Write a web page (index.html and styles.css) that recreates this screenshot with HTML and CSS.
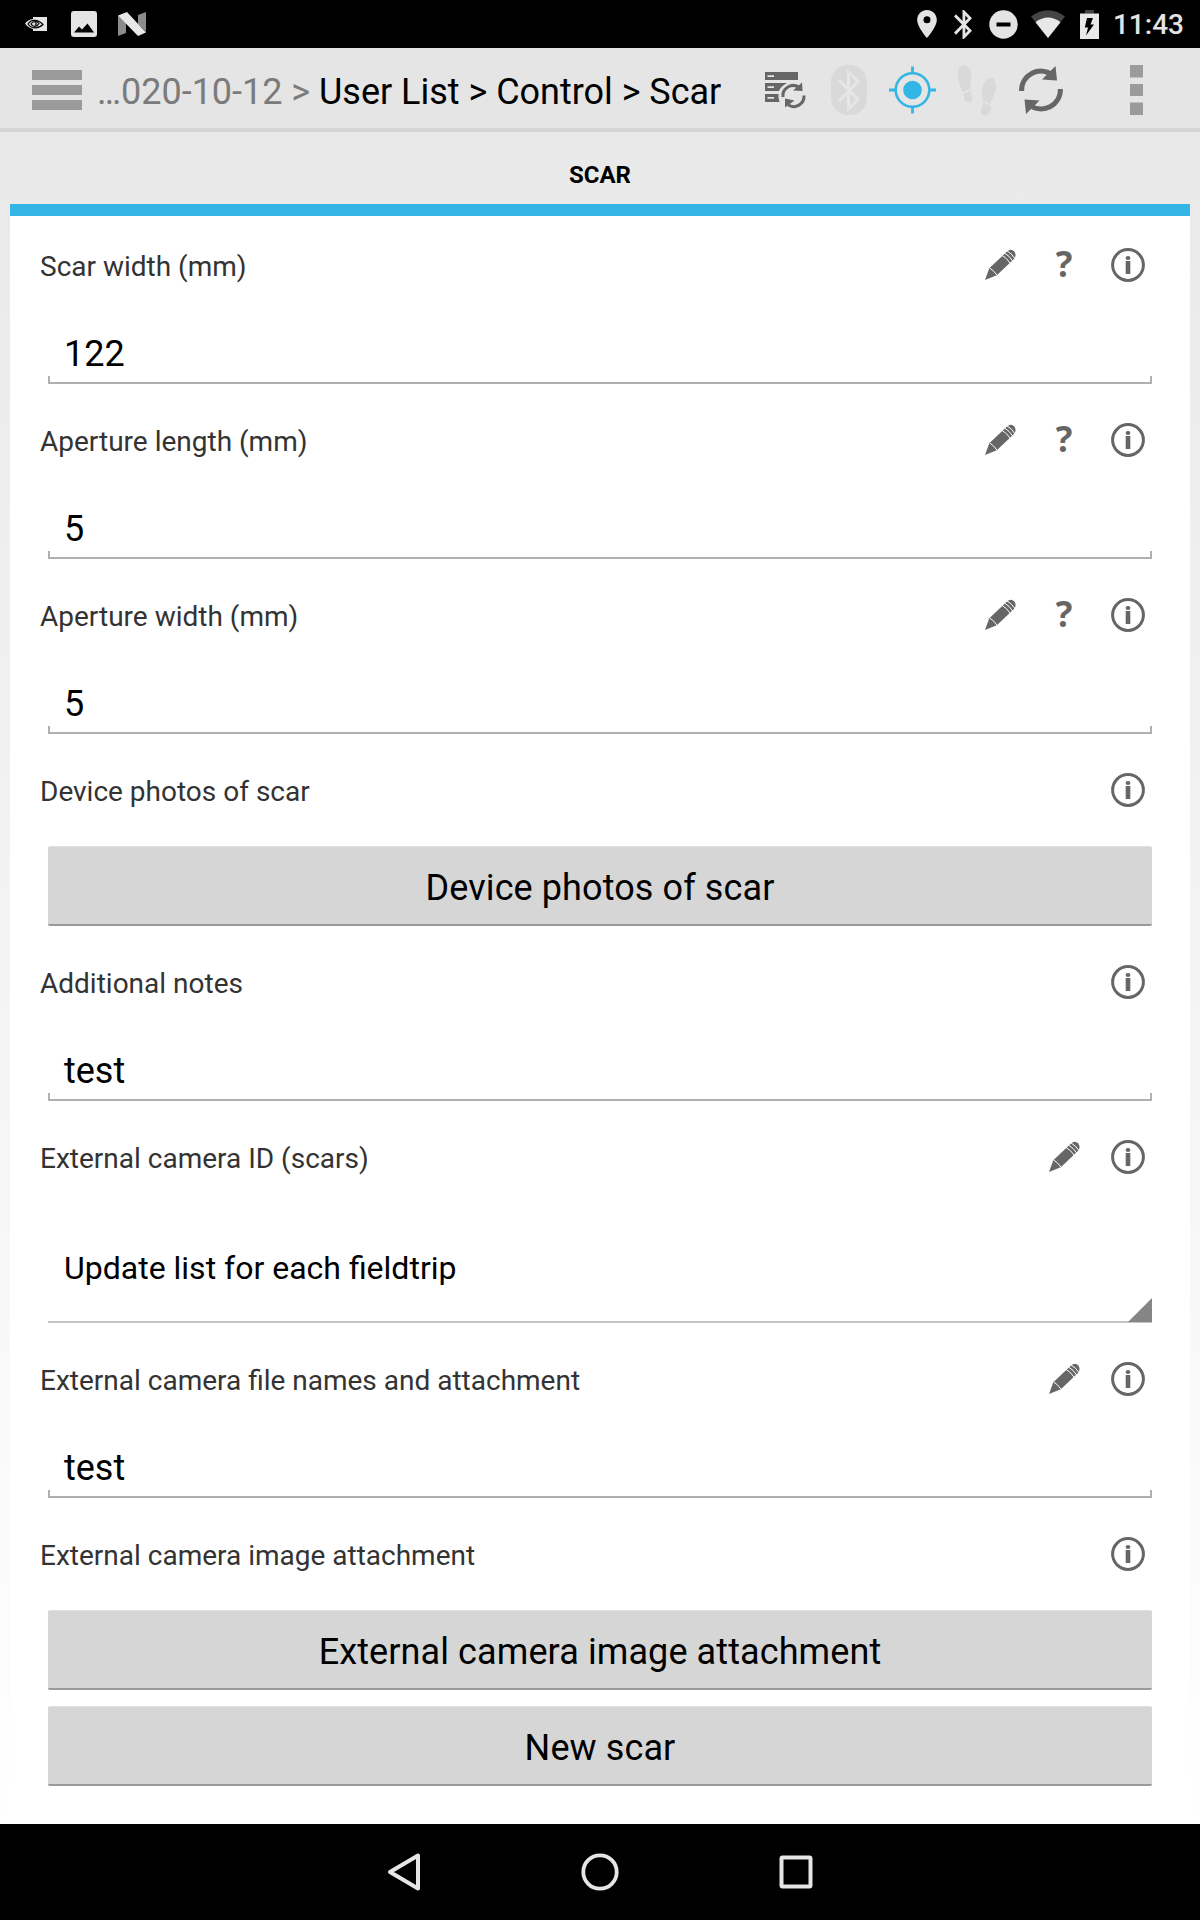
FILE: index.html
```html
<!DOCTYPE html>
<html lang="en">
<head>
<meta charset="utf-8">
<title>Scar</title>
<link rel="stylesheet" href="styles.css">
</head>
<body>
<svg class="defs" width="0" height="0" aria-hidden="true">
  <symbol id="pencil" viewBox="0 0 32 32">
    <path fill="#666" d="M1 31 5.300 19.300 23 2.600Q27-.8 30.300 2.400 33 6 30 10L12.800 26.300Z"/>
    <path d="M5.300 18.700Q10 21.500 13.500 26.800M17.800 6.200Q23.200 9.300 26.300 14.500M20.400 4Q25.500 6.800 28.700 12M22.800 1.800Q28 4.500 31 9.800" fill="none" stroke="#fff" stroke-width="1"/>
  </symbol>
  <symbol id="info" viewBox="0 0 34 34">
    <circle cx="17" cy="17" r="15.400" fill="none" stroke="#666" stroke-width="3"/>
    <ellipse cx="17" cy="10" rx="2.400" ry="2.100" fill="#666"/>
    <path d="M14.700 13h4.600v13h-4.600z" fill="#666"/>
  </symbol>
</svg>

<header class="status">
  <div class="status-left">
    <svg width="22" height="14" viewBox="0 0 22 14">
      <path d="M8 0h14v14H8v-2C4 11 1.500 9 0 6.500 2 4 4.500 2.400 8 2z" fill="#e4e4e4"/>
      <path d="M3 7C6 2 13 2 18 7.500 13.500 12 6 12 3 7ZM6 7c2-3.500 6-3 8-.5-2 3.500-6 4-8 .5Zm3.500-1.500c2 0 2.500 2 .5 2.500" fill="none" stroke="#000" stroke-width="1.200"/>
    </svg>
    <svg width="26" height="26" viewBox="0 0 26 26">
      <rect width="26" height="26" rx="3" fill="#e4e4e4"/>
      <path d="M3 21.500 8 15.500 11 18.500 16.500 12.500 23 21.500Z" fill="#000"/>
    </svg>
    <svg width="28" height="24" viewBox="0 0 28 24">
      <path d="M0 3.500 8 11V21L0 24ZM20 3 28 0V20L20 12Z" fill="#8c8c8c"/>
      <path d="M0 3.500 9 0 28 20.500 20 24Z" fill="#e8e8e8"/>
    </svg>
  </div>
  <div class="status-right">
    <svg class="s-pin" width="20" height="28" viewBox="5 2 14 20" fill="#e4e4e4"><path d="M12 2C8.130 2 5 5.130 5 9c0 5.250 7 13 7 13s7-7.750 7-13c0-3.870-3.130-7-7-7zm0 9.500a2.500 2.500 0 1 1 0-5 2.500 2.500 0 0 1 0 5z"/></svg>
    <svg class="s-bt" width="18" height="29" viewBox="5 2 12.710 20" preserveAspectRatio="none" fill="#e4e4e4"><path d="M17.710 7.710 12 2h-1v7.590L6.410 5 5 6.410 10.590 12 5 17.590 6.410 19 11 14.410V22h1l5.710-5.710L13.410 12l4.300-4.290zM13 5.830l1.880 1.880L13 9.590V5.830zm1.880 10.460L13 18.170v-3.760l1.880 1.880z"/></svg>
    <svg class="s-dnd" width="29" height="29" viewBox="0 0 29 29"><circle cx="14.500" cy="14.500" r="14.200" fill="#e4e4e4"/><path d="M7.500 12.500h14v4h-14z" fill="#000"/></svg>
    <svg class="s-wifi" width="34" height="28" viewBox="0 0 34 28"><path d="M17 28 0 6.500Q17-6 34 6.500Z" fill="#444"/><path d="M17 28 4.500 12.200Q17 3 29.500 12.200Z" fill="#e8e8e8"/></svg>
    <svg class="s-bat" width="19" height="29" viewBox="0 0 19 29"><path d="M5 0h9v3.500H5z" fill="#444"/><path d="M0 3.500h19V29H0z" fill="#e8e8e8"/><path d="M7 8h6L10.500 14.500H14L6 25.500 8 17.500H4.800Z" fill="#000"/></svg>
    <span class="clock">11:43</span>
  </div>
</header>

<div class="appbar">
  <svg class="menu" width="50" height="40" viewBox="0 0 50 40"><path d="M0 0h50v10H0zM0 15h50v10H0zM0 30h50v10H0z" fill="#9b9b9b"/></svg>
  <h1 class="crumbs"><span class="dim">…020-10-12 &gt; </span>User List &gt; Control &gt; Scar</h1>
  <div class="actions">
    <svg width="64" height="64" viewBox="0 0 64 64">
      <path d="M12 14h33v8H12zM12 25h22q-6 3-8 8H12zM12 36h13.500q-.5 4 1 8H12z" fill="#666"/>
      <path d="M14.500 17.200h6.500v1.800h-6.500zM14.500 28.200h6.500V30h-6.500zM14.500 39h6.500v1.800h-6.500z" fill="#e5e5e5"/>
      <path d="M30 39a10.300 10.300 0 0 1 16-9.700M51 37.500a10.300 10.300 0 0 1-16 9.300" fill="none" stroke="#666" stroke-width="3"/>
      <path d="M49 24.500 49.500 33 40 32.500ZM32 49.500 32 40.500 41.500 42.500Z" fill="#666"/>
    </svg>
    <svg width="64" height="64" viewBox="0 0 64 64">
      <rect x="14" y="7" width="36" height="50" rx="17" fill="#d9d9d9"/>
      <path d="M22 22 41 41.500 31.500 51V14L41 23.500 22 43" fill="none" stroke="#e6e6e6" stroke-width="3"/>
    </svg>
    <svg width="64" height="64" viewBox="0 0 64 64">
      <circle cx="31.500" cy="32" r="16.800" fill="none" stroke="#33b5e5" stroke-width="2.600"/>
      <circle cx="31.500" cy="32" r="9.300" fill="#33b5e5"/>
      <path d="M31.500 8.500V15M31.500 49v6.500M8 32h6.500M48.500 32H55" stroke="#33b5e5" stroke-width="2.800"/>
    </svg>
    <svg width="64" height="64" viewBox="0 0 64 64" fill="#d9d9d9">
      <path d="M18 7.200c6-1 9.500 8 8.200 14.500-1 4-.5 7-1.200 9L17.500 34C16 28 12.500 23.500 13 16c0-5 2-8.500 5-8.800ZM18.300 36 25.500 32.500c0 3 2 5 1.800 8.500-.5 5-8 4.500-8-.5Z"/>
      <path d="M46.500 19.800c-6-1-9.500 8-9.500 14 0 4 1 7 1.500 9L45.500 46C47 40 50.500 35.500 51 29.500c0-5.500-1.500-9.300-4.500-9.700ZM38.300 44.500 46 48c0 5-2.500 9.500-5.500 9.200-6 0-5-5-3.500-8Z"/>
    </svg>
    <svg width="64" height="64" viewBox="0 0 64 64">
      <path d="M12.600 33A19.300 19.300 0 0 1 43.500 17M51.400 31A19.300 19.300 0 0 1 20.500 47" fill="none" stroke="#666" stroke-width="5"/>
      <path d="M46.500 8 48 22.500 33 21.500ZM15.500 41.500 30.500 42.500 17 56Z" fill="#666"/>
    </svg>
  </div>
  <svg class="more" width="13" height="50" viewBox="0 0 13 50"><path d="M0 0h13v12.500H0zM0 19h13v12H0zM0 37.500h13V50H0z" fill="#9b9b9b"/></svg>
</div>

<main class="page">
  <div class="tab">SCAR</div>
  <section class="form">
    <div class="field">
      <div class="head"><label>Scar width (mm)</label><span class="ico"><svg class="i-pen"><use href="#pencil"/></svg></span><span class="ico help">?</span><span class="ico"><svg class="i-info"><use href="#info"/></svg></span></div>
      <div class="input">122</div>
    </div>
    <div class="field">
      <div class="head"><label>Aperture length (mm)</label><span class="ico"><svg class="i-pen"><use href="#pencil"/></svg></span><span class="ico help">?</span><span class="ico"><svg class="i-info"><use href="#info"/></svg></span></div>
      <div class="input">5</div>
    </div>
    <div class="field">
      <div class="head"><label>Aperture width (mm)</label><span class="ico"><svg class="i-pen"><use href="#pencil"/></svg></span><span class="ico help">?</span><span class="ico"><svg class="i-info"><use href="#info"/></svg></span></div>
      <div class="input">5</div>
    </div>
    <div class="field">
      <div class="head"><label>Device photos of scar</label><span class="ico"><svg class="i-info"><use href="#info"/></svg></span></div>
      <button class="btn">Device photos of scar</button>
    </div>
    <div class="field">
      <div class="head"><label>Additional notes</label><span class="ico"><svg class="i-info"><use href="#info"/></svg></span></div>
      <div class="input">test</div>
    </div>
    <div class="field">
      <div class="head"><label>External camera ID (scars)</label><span class="ico"><svg class="i-pen"><use href="#pencil"/></svg></span><span class="ico"><svg class="i-info"><use href="#info"/></svg></span></div>
      <div class="spinner"><span>Update list for each fieldtrip</span><svg width="24" height="24" viewBox="0 0 24 24"><path d="M24 0V24H0Z" fill="#858585"/></svg></div>
    </div>
    <div class="field">
      <div class="head"><label>External camera file names and attachment</label><span class="ico"><svg class="i-pen"><use href="#pencil"/></svg></span><span class="ico"><svg class="i-info"><use href="#info"/></svg></span></div>
      <div class="input">test</div>
    </div>
    <div class="field">
      <div class="head"><label>External camera image attachment</label><span class="ico"><svg class="i-info"><use href="#info"/></svg></span></div>
      <button class="btn">External camera image attachment</button>
      <button class="btn">New scar</button>
    </div>
  </section>
</main>

<nav class="navbar">
  <svg width="38" height="40" viewBox="0 0 38 40"><path d="M33 3.500V36.500L5 20Z" fill="none" stroke="#e6e6e6" stroke-width="4" stroke-linejoin="round"/></svg>
  <svg width="38" height="40" viewBox="0 0 38 40"><circle cx="19" cy="20" r="16.700" fill="none" stroke="#e6e6e6" stroke-width="3.800"/></svg>
  <svg width="38" height="40" viewBox="0 0 38 40"><rect x="4.500" y="5.500" width="29" height="29" rx="1" fill="none" stroke="#e6e6e6" stroke-width="4"/></svg>
</nav>
</body>
</html>
```
FILE: styles.css
```css
* { box-sizing: border-box; }
body {
  margin: 0;
  width: 1200px;
  height: 1920px;
  overflow: hidden;
  display: flex;
  flex-direction: column;
  font-family: Roboto, "Liberation Sans", sans-serif;
  color: #000;
  background: #000;
}
svg { display: block; flex: none; }
.defs { position: absolute; }

.status {
  height: 48px;
  display: flex;
  justify-content: space-between;
  align-items: center;
  padding: 0 16px 0 25px;
}
.status-left { display: flex; align-items: center; gap: 21px; }
.status-left svg:first-child { margin-right: 3px; }
.status-right { display: flex; align-items: center; }
.s-bt { margin-left: 17px; }
.s-dnd { margin-left: 17px; }
.s-wifi { margin-left: 13px; }
.s-bat { margin: 0 14px 0 15px; }
.clock { font-size: 28px; font-weight: 500; line-height: 48px; color: #e4e4e4; padding-top: 2px; }

.appbar {
  height: 84px;
  border-bottom: 4px solid #d4d4d4;
  background: #e5e5e5;
  display: flex;
  align-items: center;
  padding: 4px 57px 0 32px;
}
.crumbs {
  margin: 0 0 0 15px;
  padding-top: 4px;
  width: 656px;
  font-size: 36px;
  font-weight: 400;
  line-height: 44px;
  letter-spacing: -0.02px;
  white-space: pre;
}
.dim { color: #7b7b7b; }
.actions { display: flex; }
.more { margin-left: 57px; }

.page {
  height: 1692px;
  padding: 0 10px;
  background: linear-gradient(#e9e9e9, #fff);
}
.tab {
  height: 84px;
  border-bottom: 12px solid #33b5e5;
  text-align: center;
  font-size: 24px;
  font-weight: 700;
  line-height: 86px;
}
.form { height: 1608px; background: #fff; padding: 0 30px; }
.field { margin: 0 0 7px; }
.head { height: 98px; display: flex; align-items: center; }
.head label { flex: 1; font-size: 28px; line-height: 34px; color: #333; padding-top: 4px; }
.ico { width: 64px; display: flex; justify-content: center; }
.i-pen { width: 32px; height: 32px; }
.i-info { width: 34px; height: 34px; }
.help { font: 700 35px/40px "Open Sans", sans-serif; color: #666; padding-bottom: 2px; }
.input {
  height: 70px;
  margin: 0 8px;
  padding: 19px 16px 0;
  font-size: 36px;
  line-height: 42px;
  background:
    linear-gradient(#b0b0b0, #b0b0b0) 0 100% / 100% 2px no-repeat,
    linear-gradient(#b0b0b0, #b0b0b0) 0 100% / 2px 8px no-repeat,
    linear-gradient(#b0b0b0, #b0b0b0) 100% 100% / 2px 8px no-repeat;
}
.btn {
  display: block;
  width: 1104px;
  height: 80px;
  margin: 7px 8px 17px;
  padding: 4px 0 0;
  border: 0;
  border-top: 1px solid #e0e0e0;
  border-bottom: 2px solid #999;
  border-radius: 2px;
  background: #d6d6d6;
  font: 400 36px/42px Roboto, "Liberation Sans", sans-serif;
  letter-spacing: 0.1px;
  color: #000;
}
.btn:last-child { margin-bottom: 0; }
.btn + .btn { margin-top: -1px; }
.spinner {
  height: 117px;
  margin: 0 8px 7px;
  padding-left: 16px;
  background: linear-gradient(#c4c4c4, #c4c4c4) 0 100% / 100% 2px no-repeat;
  display: flex;
  align-items: flex-end;
  justify-content: space-between;
  font-size: 32px;
}
.spinner span { align-self: center; line-height: 38px; padding-top: 6px; }
.spinner svg { margin-bottom: 1px; }

.navbar { height: 96px; display: flex; justify-content: center; align-items: center; gap: 158px; }
```
